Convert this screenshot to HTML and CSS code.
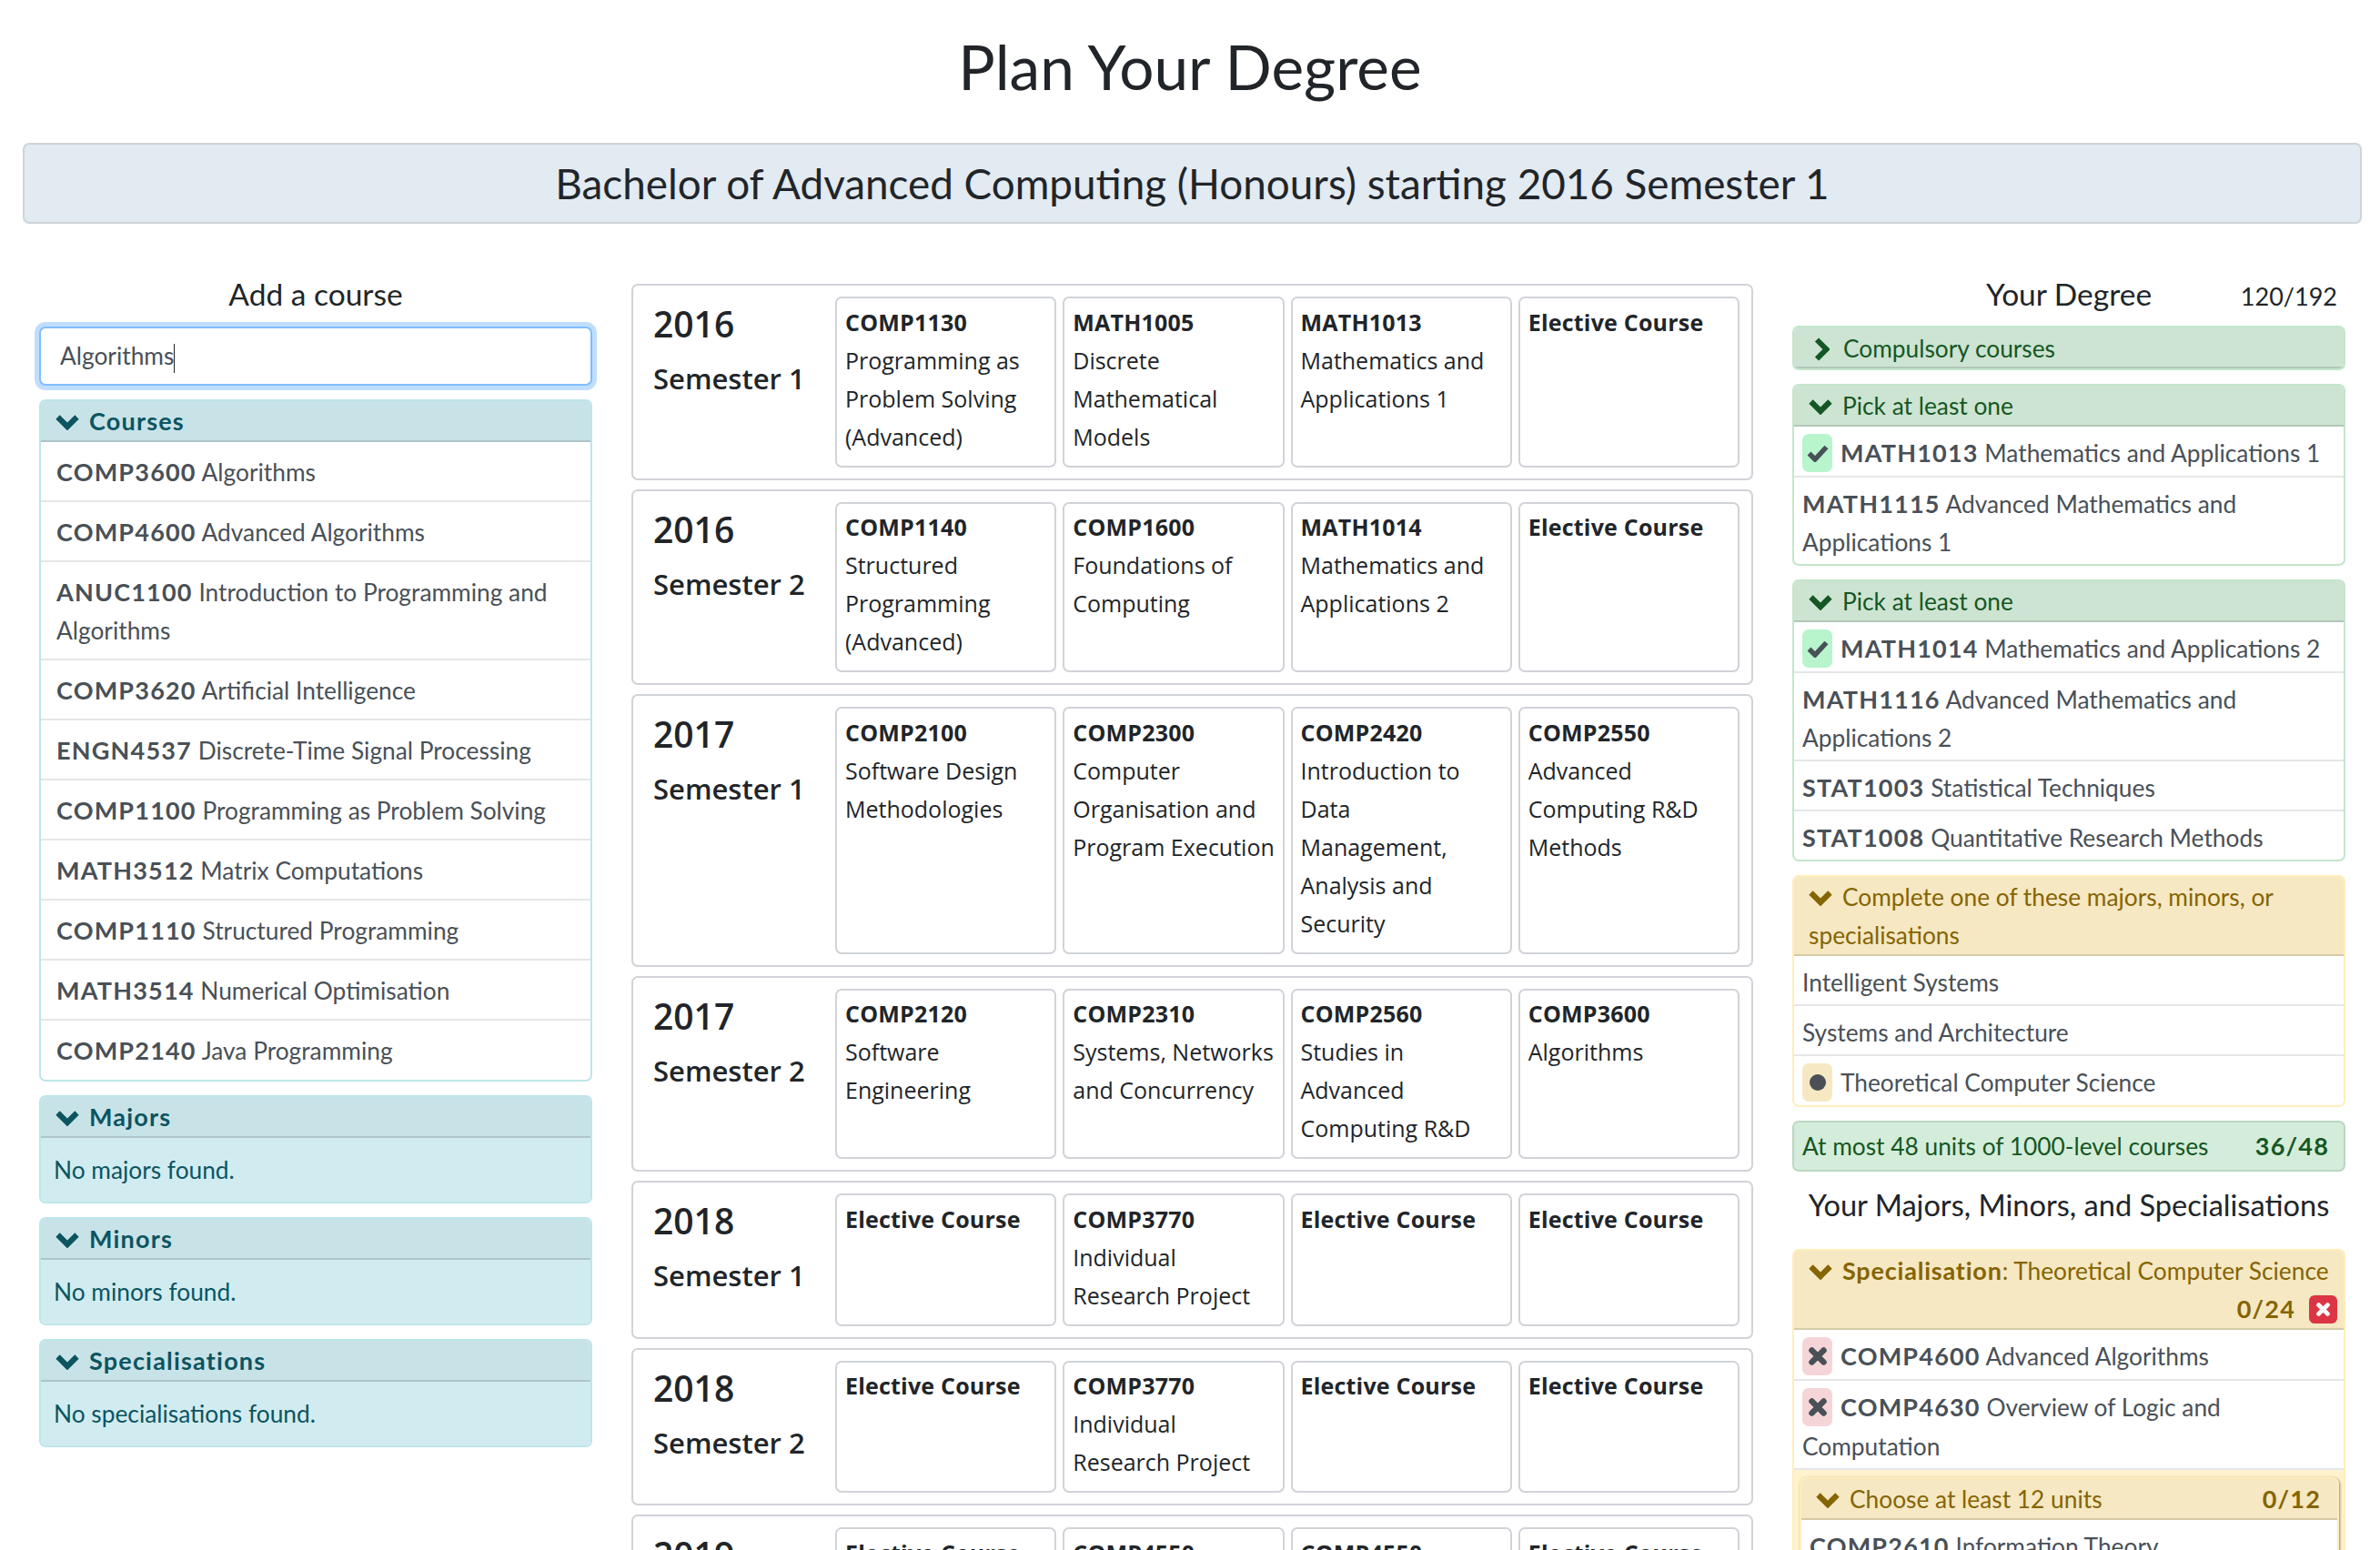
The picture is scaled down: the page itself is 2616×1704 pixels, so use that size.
FILE: index.html
```html
<!DOCTYPE html>
<html lang="en">
<head>
<title>Plan Your Degree</title>
<link rel="stylesheet" href="styles.css">
</head>
<body>
<svg class="sprite" xmlns="http://www.w3.org/2000/svg">
  <symbol id="down" viewBox="0 0 26 18"><path d="M2.500 3.500L13 14 23.500 3.500" fill="none" stroke="currentColor" stroke-width="6.200"/></symbol>
  <symbol id="right" viewBox="0 0 18 26"><path d="M4 2.500l10.500 10.500L4 23.500" fill="none" stroke="currentColor" stroke-width="6"/></symbol>
  <symbol id="check" viewBox="0 0 24 20"><path d="M2.500 10.500l6.500 6.500L21.500 3.500" fill="none" stroke="currentColor" stroke-width="5.500"/></symbol>
  <symbol id="cross" viewBox="0 0 20 20"><path d="M3.500 3.500l13 13M16.500 3.500l-13 13" fill="none" stroke="currentColor" stroke-width="6.500" stroke-linecap="round"/></symbol>
</svg>

<h1 class="title">Plan Your Degree</h1>
<div class="banner">Bachelor of Advanced Computing (Honours) starting 2016 Semester 1</div>

<div class="columns">

  <div class="search-col">
    <h4 class="col-title">Add a course</h4>
    <div class="search-box">Algorithms<span class="caret"></span></div>

    <div class="card info">
      <div class="card-head bold"><svg class="chev"><use href="#down"/></svg>Courses</div>
      <div class="item"><b>COMP3600</b> Algorithms</div>
      <div class="item"><b>COMP4600</b> Advanced Algorithms</div>
      <div class="item"><b>ANUC1100</b> Introduction to Programming and Algorithms</div>
      <div class="item"><b>COMP3620</b> Artificial Intelligence</div>
      <div class="item"><b>ENGN4537</b> Discrete-Time Signal Processing</div>
      <div class="item"><b>COMP1100</b> Programming as Problem Solving</div>
      <div class="item"><b>MATH3512</b> Matrix Computations</div>
      <div class="item"><b>COMP1110</b> Structured Programming</div>
      <div class="item"><b>MATH3514</b> Numerical Optimisation</div>
      <div class="item"><b>COMP2140</b> Java Programming</div>
    </div>
    <div class="card info">
      <div class="card-head bold"><svg class="chev"><use href="#down"/></svg>Majors</div>
      <div class="card-empty">No majors found.</div>
    </div>
    <div class="card info">
      <div class="card-head bold"><svg class="chev"><use href="#down"/></svg>Minors</div>
      <div class="card-empty">No minors found.</div>
    </div>
    <div class="card info">
      <div class="card-head bold"><svg class="chev"><use href="#down"/></svg>Specialisations</div>
      <div class="card-empty">No specialisations found.</div>
    </div>
  </div>

  <div class="plan-col">
    <div class="sem">
      <div class="sem-label"><div class="sem-year">2016</div><div class="sem-name">Semester 1</div></div>
      <div class="course"><b>COMP1130</b>Programming as Problem Solving (Advanced)</div>
      <div class="course"><b>MATH1005</b>Discrete Mathematical Models</div>
      <div class="course"><b>MATH1013</b>Mathematics and Applications 1</div>
      <div class="course"><b>Elective Course</b></div>
    </div>
    <div class="sem">
      <div class="sem-label"><div class="sem-year">2016</div><div class="sem-name">Semester 2</div></div>
      <div class="course"><b>COMP1140</b>Structured Programming (Advanced)</div>
      <div class="course"><b>COMP1600</b>Foundations of Computing</div>
      <div class="course"><b>MATH1014</b>Mathematics and Applications 2</div>
      <div class="course"><b>Elective Course</b></div>
    </div>
    <div class="sem">
      <div class="sem-label"><div class="sem-year">2017</div><div class="sem-name">Semester 1</div></div>
      <div class="course"><b>COMP2100</b>Software Design Methodologies</div>
      <div class="course"><b>COMP2300</b>Computer Organisation and Program Execution</div>
      <div class="course"><b>COMP2420</b>Introduction to Data<br>Management, Analysis and Security</div>
      <div class="course"><b>COMP2550</b>Advanced Computing R&amp;D Methods</div>
    </div>
    <div class="sem">
      <div class="sem-label"><div class="sem-year">2017</div><div class="sem-name">Semester 2</div></div>
      <div class="course"><b>COMP2120</b>Software Engineering</div>
      <div class="course"><b>COMP2310</b>Systems, Networks and Concurrency</div>
      <div class="course"><b>COMP2560</b>Studies in Advanced Computing R&amp;D</div>
      <div class="course"><b>COMP3600</b>Algorithms</div>
    </div>
    <div class="sem">
      <div class="sem-label"><div class="sem-year">2018</div><div class="sem-name">Semester 1</div></div>
      <div class="course"><b>Elective Course</b></div>
      <div class="course"><b>COMP3770</b>Individual Research Project</div>
      <div class="course"><b>Elective Course</b></div>
      <div class="course"><b>Elective Course</b></div>
    </div>
    <div class="sem">
      <div class="sem-label"><div class="sem-year">2018</div><div class="sem-name">Semester 2</div></div>
      <div class="course"><b>Elective Course</b></div>
      <div class="course"><b>COMP3770</b>Individual Research Project</div>
      <div class="course"><b>Elective Course</b></div>
      <div class="course"><b>Elective Course</b></div>
    </div>
    <div class="sem">
      <div class="sem-label"><div class="sem-year">2019</div><div class="sem-name">Semester 1</div></div>
      <div class="course"><b>Elective Course</b></div>
      <div class="course"><b>COMP4550</b>Advanced Computing Research Project</div>
      <div class="course"><b>COMP4550</b>Advanced Computing Research Project</div>
      <div class="course"><b>Elective Course</b></div>
    </div>
  </div>

  <div class="degree-col">
    <div class="degree-top">
      <h4 class="col-title">Your Degree</h4>
      <span class="units">120/192</span>
    </div>

    <div class="card good closed">
      <div class="card-head"><svg class="chev-right"><use href="#right"/></svg>Compulsory courses</div>
    </div>

    <div class="card good">
      <div class="card-head"><svg class="chev"><use href="#down"/></svg>Pick at least one</div>
      <div class="row"><span class="badge ok"><svg class="tick"><use href="#check"/></svg></span><b>MATH1013</b> Mathematics and Applications 1</div>
      <div class="row"><b>MATH1115</b> Advanced Mathematics and Applications 1</div>
    </div>

    <div class="card good">
      <div class="card-head"><svg class="chev"><use href="#down"/></svg>Pick at least one</div>
      <div class="row"><span class="badge ok"><svg class="tick"><use href="#check"/></svg></span><b>MATH1014</b> Mathematics and Applications 2</div>
      <div class="row"><b>MATH1116</b> Advanced Mathematics and Applications 2</div>
      <div class="row"><b>STAT1003</b> Statistical Techniques</div>
      <div class="row"><b>STAT1008</b> Quantitative Research Methods</div>
    </div>

    <div class="card warn">
      <div class="card-head"><svg class="chev"><use href="#down"/></svg>Complete one of these majors, minors, or specialisations</div>
      <div class="row">Intelligent Systems</div>
      <div class="row">Systems and Architecture</div>
      <div class="row"><span class="badge some"><span class="dot"></span></span>Theoretical Computer Science</div>
    </div>

    <div class="limit"><span>At most 48 units of 1000-level courses</span><b>36/48</b></div>

    <h4 class="col-title majors-title">Your Majors, Minors, and Specialisations</h4>

    <div class="card warn">
      <div class="card-head spec-head">
        <svg class="chev"><use href="#down"/></svg><b>Specialisation</b>: Theoretical Computer Science
        <div class="head-right"><b>0/24</b><span class="remove"><svg class="remove-x"><use href="#cross"/></svg></span></div>
      </div>
      <div class="row"><span class="badge bad"><svg class="tick"><use href="#cross"/></svg></span><b>COMP4600</b> Advanced Algorithms</div>
      <div class="row"><span class="badge bad"><svg class="tick"><use href="#cross"/></svg></span><b>COMP4630</b> Overview of Logic and Computation</div>
      <div class="nested">
        <div class="card warn inner">
          <div class="card-head split"><span><svg class="chev"><use href="#down"/></svg>Choose at least 12 units</span><b>0/12</b></div>
          <div class="row"><b>COMP2610</b> Information Theory</div>
        </div>
      </div>
    </div>
  </div>

</div>
</body>
</html>
```

FILE: styles.css
```css
html {
  overflow: hidden;
}
body {
  margin: 0;
  font-family: Lato, "Liberation Sans", sans-serif;
  font-size: 26.300px;
  line-height: 42px;
  color: #212529;
  background: #fff;
}
b {
  font-weight: 700;
  font-size: 27px;
  letter-spacing: 1.200px;
}
.sprite {
  display: none;
}

.title {
  margin: 0;
  padding-top: 31px;
  height: 157px;
  box-sizing: border-box;
  font-size: 67.500px;
  line-height: 84px;
  font-weight: 400;
  text-align: center;
}
.banner {
  margin: 0 20px 57px 25px;
  height: 89px;
  box-sizing: border-box;
  background: #e2eaf2;
  border: 2px solid #d0d3d8;
  border-radius: 7px;
  font-size: 45.800px;
  line-height: 85px;
  text-align: center;
}

.columns {
  display: grid;
  grid-template-columns: 608px 1233px 608px;
  column-gap: 43px;
  padding-left: 43px;
}

.col-title {
  margin: 0;
  padding-bottom: 2px;
  font-size: 33.500px;
  line-height: 40px;
  font-weight: 400;
  text-align: center;
}

/* left column */
.search-box {
  margin: 14px 0 15px;
  height: 65px;
  box-sizing: border-box;
  padding: 0 21px;
  background: #fff;
  border: 2px solid #80bdff;
  border-radius: 7px;
  box-shadow: 0 0 0 5px #bfdeff;
  color: #495057;
  line-height: 60px;
}
.caret {
  display: inline-block;
  width: 1px;
  height: 32px;
  background: #212529;
  vertical-align: middle;
}

/* cards */
.card {
  margin-bottom: 15px;
  border: 2px solid;
  border-radius: 7px;
  background: #fff;
  overflow: hidden;
}
.card-head {
  padding: 1px 16px 0;
  border-bottom: 2px solid rgba(0, 0, 0, 0.13);
}
.chev {
  width: 26px;
  height: 18px;
  margin-right: 11px;
}
.chev-right {
  width: 18px;
  height: 26px;
  margin: 0 15px 0 5px;
  vertical-align: -4px;
}
.info {
  border-color: #bee5eb;
  color: #0c5460;
}
.info .card-head {
  background: #c8e3e8;
}
.bold {
  font-weight: 700;
  font-size: 27px;
  letter-spacing: 1.200px;
}
.item {
  padding: 12px 17px 10px;
  border-bottom: 2px solid #e4e6e8;
  color: #495057;
}
.item:last-child {
  padding-bottom: 11px;
  border-bottom: 0;
}
.card-empty {
  padding: 14px;
  background: #d1ecf1;
  color: #0c5460;
}

/* centre column */
.plan-col {
  padding-top: 9px;
  font-family: "Open Sans", "Liberation Sans", sans-serif;
  font-size: 25px;
}
.sem {
  display: flex;
  gap: 7px;
  margin-bottom: 10px;
  padding: 12px 13px;
  border: 2px solid #d0d3d8;
  border-radius: 7px;
}
.sem-label {
  width: 193px;
  padding: 0 0 0 9px;
  flex: none;
}
.sem-year {
  margin-top: 2px;
  font-size: 39px;
  line-height: 56px;
  font-weight: 600;
}
.sem-name {
  margin-top: 2px;
  font-size: 31px;
  line-height: 60px;
  font-weight: 600;
}
.course {
  flex: 1 1 0;
  min-width: 0;
  padding: 4.500px 5px 11px 9px;
  border: 2px solid #d0d3d8;
  border-radius: 7px;
}
.course b {
  display: block;
  font-size: 25px;
  letter-spacing: 0.200px;
}

/* right column */
.degree-top {
  position: relative;
  margin-bottom: 13px;
}
.units {
  position: absolute;
  right: 9px;
  top: 2px;
  font-size: 27px;
}
.good {
  border-color: #c3e6cb;
  color: #155724;
}
.good .card-head {
  background: #cde4d3;
}
.warn {
  border-color: #ffeeba;
  color: #856404;
}
.warn > .card-head {
  background: #f6e8c2;
}
.closed .card-head {
  padding-top: 3px;
  line-height: 40px;
}
.row {
  padding: 8px 9px 3px;
  border-bottom: 2px solid #e4e6e8;
  color: #495057;
}
.row:last-child {
  border-bottom: 0;
}
.badge {
  display: inline-flex;
  align-items: center;
  justify-content: center;
  width: 33px;
  height: 42px;
  margin: 0 9px 1px 0;
  border-radius: 7px;
  vertical-align: top;
}
.ok {
  background: #b8f5cc;
}
.some {
  background: #f6e8c2;
}
.bad {
  background: #f5d5d8;
}
.tick {
  width: 24px;
  height: 20px;
}
.bad .tick {
  width: 20px;
  height: 20px;
}
.dot {
  width: 18px;
  height: 18px;
  border-radius: 50%;
  background: #495057;
}
.limit {
  display: flex;
  justify-content: space-between;
  margin-bottom: 16px;
  padding: 5px 16px 5px 9px;
  background: #d4edda;
  border: 2px solid #bcd6c4;
  border-radius: 7px;
  color: #155724;
}
.majors-title {
  padding-bottom: 0;
  margin-bottom: 27px;
  line-height: 42px;
  font-size: 32.600px;
}
.spec-head {
  padding-right: 7px;
}
.spec-head > b {
  letter-spacing: 0.800px;
}
.head-right {
  display: flex;
  justify-content: flex-end;
  align-items: center;
  gap: 15px;
}
.remove {
  display: flex;
  align-items: center;
  justify-content: center;
  width: 31px;
  height: 31px;
  border-radius: 6px;
  background: #dc3545;
  color: #fff;
}
.remove-x {
  width: 15px;
  height: 15px;
}
.nested {
  padding: 8px 5px 0 6px;
  background: #fff3cd;
}
.inner {
  margin-bottom: 0;
  box-shadow: 1px 1px 3px rgba(0, 0, 0, 0.45);
}
.split {
  display: flex;
  justify-content: space-between;
  padding-right: 18px;
}
```
